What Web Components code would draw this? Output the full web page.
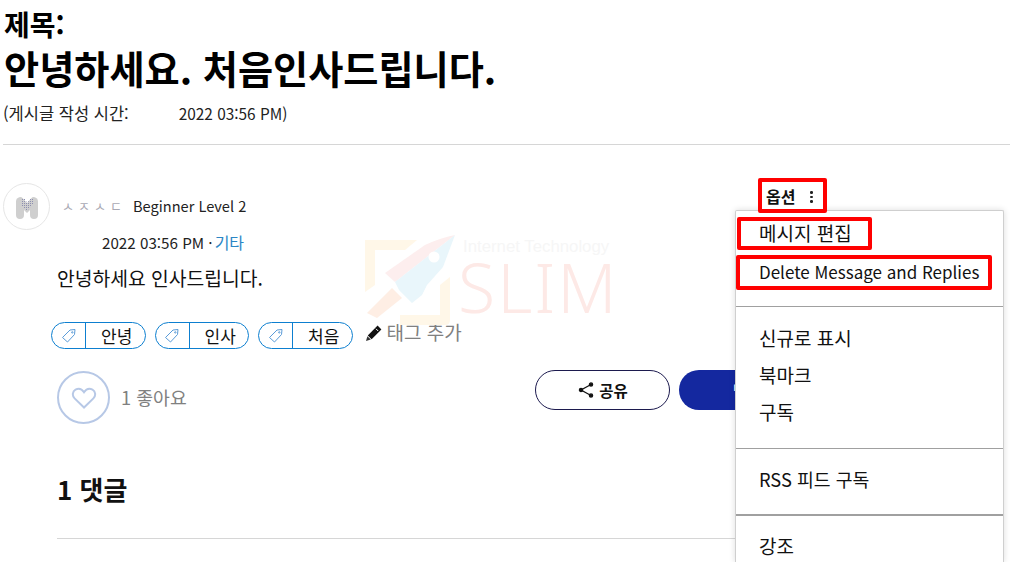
<!DOCTYPE html>
<html lang="ko">
<head>
<meta charset="utf-8">
<title>게시글</title>
<style>
    html, body {
        margin: 0;
        height: 562px;
        overflow: hidden;
        background: #fff;
        color: #000;
        font-family: "Noto Sans CJK KR", "Noto Sans", sans-serif;
    }
</style>
</head>
<body>
<post-page>
    <post-header></post-header>
    <post-author></post-author>
    <post-tags></post-tags>
    <post-actions></post-actions>
    <post-replies></post-replies>
</post-page>
<brand-watermark></brand-watermark>
<options-menu></options-menu>

<script>
const FONT = '"Noto Sans CJK KR", "Noto Sans", sans-serif';

class PostPage extends HTMLElement {
    constructor() {
        super();
        const shadow = this.attachShadow({ mode: 'open' });
        shadow.innerHTML = `
            <style>
                :host {
                    display: block;
                    width: 1010px;
                    height: 562px;
                    overflow: hidden;
                    font-family: ${FONT};
                }
            </style>
            <slot></slot>
        `;
    }
}

class PostHeader extends HTMLElement {
    constructor() {
        super();
        const shadow = this.attachShadow({ mode: 'open' });
        shadow.innerHTML = `
            <style>
                :host {
                    display: block;
                    padding: 7px 0 0 3px;
                }
                .label {
                    font-size: 28px;
                    font-weight: 700;
                    line-height: 35px;
                    padding-left: 1px;
                }
                h1 {
                    margin: 0;
                    font-size: 38.2px;
                    font-weight: 700;
                    line-height: 52px;
                    padding-left: 1px;
                }
                .meta {
                    display: flex;
                    gap: 50px;
                    margin-top: 9px;
                    line-height: 20px;
                    color: #222;
                }
                .meta .ko {
                    font-size: 16.5px;
                }
                .meta .time {
                    font-size: 15.4px;
                }
                .rule {
                    height: 1px;
                    margin-top: 21px;
                    background: #d6d6d6;
                }
            </style>
            <div class="label">제목:</div>
            <h1>안녕하세요. 처음인사드립니다.</h1>
            <div class="meta"><span class="ko">(게시글 작성 시간:</span><span class="time">2022 03:56 PM)</span></div>
            <div class="rule"></div>
        `;
    }
}

class PostAuthor extends HTMLElement {
    constructor() {
        super();
        const shadow = this.attachShadow({ mode: 'open' });
        shadow.innerHTML = `
            <style>
                :host {
                    display: block;
                    padding: 38px 0 0 3px;
                }
                .top {
                    display: flex;
                    align-items: center;
                    height: 47px;
                }
                .avatar {
                    width: 45px;
                    height: 45px;
                    border: 1px solid #e6e6e6;
                    border-radius: 50%;
                    display: flex;
                    align-items: center;
                    justify-content: center;
                    flex: none;
                }
                .name {
                    margin: -2px 0 0 12px;
                    width: 71px;
                    font-size: 13px;
                    letter-spacing: 4px;
                    color: #a9a9b4;
                }
                .level {
                    margin-top: -2px;
                    font-size: 14.6px;
                    color: #222;
                }
                .date {
                    margin: 0 0 0 99px;
                    font-size: 15.2px;
                    line-height: 24px;
                    color: #222;
                }
                .date a {
                    margin-left: 2px;
                    color: #2b86c5;
                    font-size: 16px;
                }
                .body {
                    margin: 11px 0 0 54px;
                    font-size: 19.3px;
                    line-height: 26px;
                    color: #111;
                }
            </style>
            <div class="top">
                <div class="avatar">
                    <svg width="26" height="24" viewBox="0 0 26 24">
                        <defs>
                            <pattern id="dots" width="2" height="2" patternUnits="userSpaceOnUse">
                                <rect width="1" height="1" fill="#8d8fb0"/>
                            </pattern>
                        </defs>
                        <path d="M2 20V6a4 4 0 0 1 7-2.500L13 8l4-4.500A4 4 0 0 1 24 6v14a4 4 0 0 1-8 0v-5l-3 3-3-3v5a4 4 0 0 1-8 0z" fill="#cfcfcf"/>
                        <path d="M7 3h4l2 5 4-5h2v6l-6 7-6-6z" fill="url(#dots)"/>
                    </svg>
                </div>
                <span class="name">ㅅㅈㅅㄷ</span>
                <span class="level">Beginner Level 2</span>
            </div>
            <div class="date">2022 03:56 PM ·<a>기타</a></div>
            <div class="body">안녕하세요 인사드립니다.</div>
        `;
    }
}

class TagPill extends HTMLElement {
    constructor() {
        super();
        const shadow = this.attachShadow({ mode: 'open' });
        shadow.innerHTML = `
            <style>
                :host {
                    display: block;
                    height: 25px;
                    border: 1px solid #0d7fd0;
                    border-radius: 14px;
                }
                .inner {
                    display: flex;
                    height: 100%;
                    align-items: center;
                }
                .icon {
                    width: 33px;
                    height: 100%;
                    display: flex;
                    align-items: center;
                    justify-content: center;
                    border-right: 1px solid #0d7fd0;
                }
                .text {
                    width: 58.500px;
                    padding-left: 3px;
                    box-sizing: border-box;
                    text-align: center;
                    font-size: 17px;
                    line-height: 25px;
                    color: #111;
                }
            </style>
            <div class="inner">
                <span class="icon">
                    <svg width="18" height="18" viewBox="0 0 18 18" fill="none" stroke="#5a9bd8" stroke-width="1">
                        <path d="M2.500 10.500 10 3l5-.5-.5 5L7.500 15z"/>
                        <circle cx="12.300" cy="5.400" r=".7"/>
                    </svg>
                </span>
                <span class="text"><slot></slot></span>
            </div>
        `;
    }
}

class PostTags extends HTMLElement {
    constructor() {
        super();
        const shadow = this.attachShadow({ mode: 'open' });
        shadow.innerHTML = `
            <style>
                :host {
                    display: flex;
                    align-items: center;
                    gap: 9px;
                    margin-top: 31px;
                    padding-left: 51px;
                    height: 27px;
                }
                .add {
                    display: flex;
                    align-items: center;
                    gap: 4px;
                    margin-left: 3px;
                    font-size: 19px;
                    color: #808080;
                    margin-top: -9px;
                }
                svg {
                    flex: none;
                    margin-top: 4px;
                }
            </style>
            <tag-pill>안녕</tag-pill>
            <tag-pill>인사</tag-pill>
            <tag-pill>처음</tag-pill>
            <span class="add">
                <svg width="18" height="18" viewBox="0 0 18 18">
                    <path d="M12.600 1.600 16.400 5.400 6.600 15.200 2.800 11.400z" fill="#111"/>
                    <path d="M2.400 12.200 5.800 15.600 1 17z" fill="#333"/>
                    <path d="M11 4.800 13.200 7" stroke="#fff" stroke-width="1"/>
                </svg>
                태그 추가
            </span>
        `;
    }
}

class PostActions extends HTMLElement {
    constructor() {
        super();
        const shadow = this.attachShadow({ mode: 'open' });
        shadow.innerHTML = `
            <style>
                :host {
                    display: flex;
                    align-items: center;
                    width: 730px;
                    margin-top: 22px;
                    padding-left: 57px;
                    height: 53px;
                }
                .like {
                    width: 49px;
                    height: 49px;
                    border: 2px solid #b7c8e6;
                    border-radius: 50%;
                    display: flex;
                    align-items: center;
                    justify-content: center;
                    flex: none;
                }
                .count {
                    margin: 0 0 2px 11px;
                    font-size: 18.300px;
                    color: #808080;
                }
                .share, .reply {
                    display: flex;
                    align-items: center;
                    height: 40px;
                    border-radius: 20px;
                    box-sizing: border-box;
                    align-self: flex-start;
                    margin-top: -1px;
                    font-size: 15.500px;
                    font-weight: 700;
                }
                .share {
                    margin-left: auto;
                    width: 135px;
                    justify-content: center;
                    gap: 4px;
                    border: 1px solid #1c1a4e;
                    color: #111;
                }
                .reply {
                    margin-left: 9px;
                    width: 108px;
                    padding-left: 54px;
                    background: #14289f;
                    color: #fff;
                }
            </style>
            <span class="like">
                <svg width="26" height="24" viewBox="0 0 26 24" fill="none" stroke="#b7c8e6" stroke-width="2">
                    <path d="M13 21.500 3.600 12.400C.8 9.600 1.500 5.300 4.500 3.700 7.400 2.200 10.800 3 13 6.200 15.200 3 18.600 2.200 21.500 3.700c3 1.600 3.700 5.900.9 8.700z"/>
                </svg>
            </span>
            <span class="count">1 좋아요</span>
            <span class="share">
                <svg width="18" height="18" viewBox="0 0 18 18" fill="#111" stroke="#111" stroke-width="1.300">
                    <path d="M14 3.500 4 9l10 5.500" fill="none"/>
                    <circle cx="14" cy="3.500" r="1.600"/>
                    <circle cx="4" cy="9" r="1.600"/>
                    <circle cx="14" cy="14.500" r="1.600"/>
                </svg>
                공유
            </span>
            <span class="reply">답글</span>
        `;
    }
}

class PostReplies extends HTMLElement {
    constructor() {
        super();
        const shadow = this.attachShadow({ mode: 'open' });
        shadow.innerHTML = `
            <style>
                :host {
                    display: block;
                    margin-top: 45px;
                    margin-left: 57px;
                    width: 690px;
                }
                h2 {
                    margin: 0;
                    font-size: 26px;
                    font-weight: 700;
                    line-height: 40px;
                    color: #111;
                }
                .rule {
                    height: 1px;
                    margin-top: 29px;
                    background: #d6d6d6;
                }
            </style>
            <h2>1 댓글</h2>
            <div class="rule"></div>
        `;
    }
}

class BrandWatermark extends HTMLElement {
    constructor() {
        super();
        const shadow = this.attachShadow({ mode: 'open' });
        shadow.innerHTML = `
            <style>
                :host {
                    position: absolute;
                    left: 365px;
                    top: 235px;
                    width: 250px;
                    height: 92px;
                    pointer-events: none;
                    font-family: "Liberation Sans", sans-serif;
                }
                svg {
                    position: absolute;
                    left: 0;
                    top: 0;
                }
                .small {
                    position: absolute;
                    left: 98px;
                    top: 3px;
                    font-size: 16.800px;
                    line-height: 18px;
                    white-space: nowrap;
                    color: #f6f6f6;
                }
                .big {
                    position: absolute;
                    left: 93px;
                    top: 21px;
                    font-family: "Noto Sans", sans-serif;
                    font-weight: 300;
                    font-size: 68px;
                    line-height: 62px;
                    letter-spacing: 2px;
                    color: #fde9e6;
                }
            </style>
            <svg width="92" height="92" viewBox="0 0 92 92">
                <path d="M0 5H52L40 15H10V50L0 57z" fill="#fff7e8"/>
                <path d="M85 42 75 50V80H35V90H80Q85 90 85 85z" fill="#fff7e8"/>
                <path d="M2 78 27 53 37 63 12 83z" fill="#feeee4"/>
                <path d="M20 38 60 10Q75 3 90 0L30 47z" fill="#fdeeee"/>
                <path d="M30 47 90 0 78 32 62 50 57 60 47 68 34 55z" fill="#e9f6fb"/>
                <circle cx="69" cy="22" r="5.500" fill="#fff"/>
            </svg>
            <span class="small">Internet Technology</span>
            <span class="big">SLIM</span>
        `;
    }
}

class OptionsMenu extends HTMLElement {
    constructor() {
        super();
        const shadow = this.attachShadow({ mode: 'open' });
        shadow.innerHTML = `
            <style>
                :host {
                    position: absolute;
                    left: 735px;
                    top: 178px;
                    width: 270px;
                    height: 384px;
                    font-family: ${FONT};
                }
                .trigger {
                    position: absolute;
                    left: 23px;
                    top: 0;
                    width: 69px;
                    height: 35px;
                    box-sizing: border-box;
                    display: flex;
                    align-items: center;
                    padding-left: 4px;
                    gap: 15px;
                    font-size: 16px;
                    font-weight: 700;
                    line-height: 20px;
                    color: #111;
                    border: 4px solid #f00;
                    border-radius: 2px;
                    background: #fff;
                    z-index: 2;
                }
                .dots {
                    display: flex;
                    flex-direction: column;
                    gap: 2px;
                    margin-top: 3px;
                }
                .dots i {
                    width: 2.500px;
                    height: 2.500px;
                    border-radius: 50%;
                    background: #222;
                }
                .panel {
                    position: absolute;
                    left: 0;
                    top: 32px;
                    width: 269px;
                    height: 352px;
                    box-sizing: border-box;
                    background: #fff;
                    border: 1px solid #cfcfcf;
                    border-bottom: 0;
                    border-radius: 2px 2px 0 0;
                    box-shadow: 0 0 6px rgba(0, 0, 0, 0.14);
                    font-size: 19px;
                    color: #111;
                }
                .item {
                    padding-left: 23px;
                    line-height: 37px;
                    height: 37px;
                    white-space: nowrap;
                }
                .latin {
                    font-size: 17px;
                }
                .rss {
                    font-size: 18.300px;
                }
                .rule {
                    height: 1px;
                    background: #a0a0a0;
                }
                .rule.thick {
                    height: 2px;
                }
                .mark {
                    position: absolute;
                    box-sizing: border-box;
                    border: 4px solid #f00;
                    border-radius: 2px;
                }
                .edit {
                    left: 2px;
                    top: 39px;
                    width: 135px;
                    height: 33px;
                }
                .del {
                    left: 1px;
                    top: 77px;
                    width: 256px;
                    height: 35px;
                }
            </style>
            <div class="trigger">옵션 <span class="dots"><i></i><i></i><i></i></span></div>
            <div class="panel">
                <div class="item" style="margin-top:3px">메시지 편집</div>
                <div class="item latin" style="margin-top:2px">Delete Message and Replies</div>
                <div class="rule" style="margin-top:16px"></div>
                <div class="item" style="margin-top:12px">신규로 표시</div>
                <div class="item">북마크</div>
                <div class="item">구독</div>
                <div class="rule" style="margin-top:18px"></div>
                <div class="item rss" style="margin-top:12px">RSS 피드 구독</div>
                <div class="rule thick" style="margin-top:16px"></div>
                <div class="item" style="margin-top:11px">강조</div>
            </div>
            <div class="mark edit"></div>
            <div class="mark del"></div>
        `;
    }
}

customElements.define('post-page', PostPage);
customElements.define('post-header', PostHeader);
customElements.define('post-author', PostAuthor);
customElements.define('tag-pill', TagPill);
customElements.define('post-tags', PostTags);
customElements.define('post-actions', PostActions);
customElements.define('post-replies', PostReplies);
customElements.define('brand-watermark', BrandWatermark);
customElements.define('options-menu', OptionsMenu);
</script>
</body>
</html>
